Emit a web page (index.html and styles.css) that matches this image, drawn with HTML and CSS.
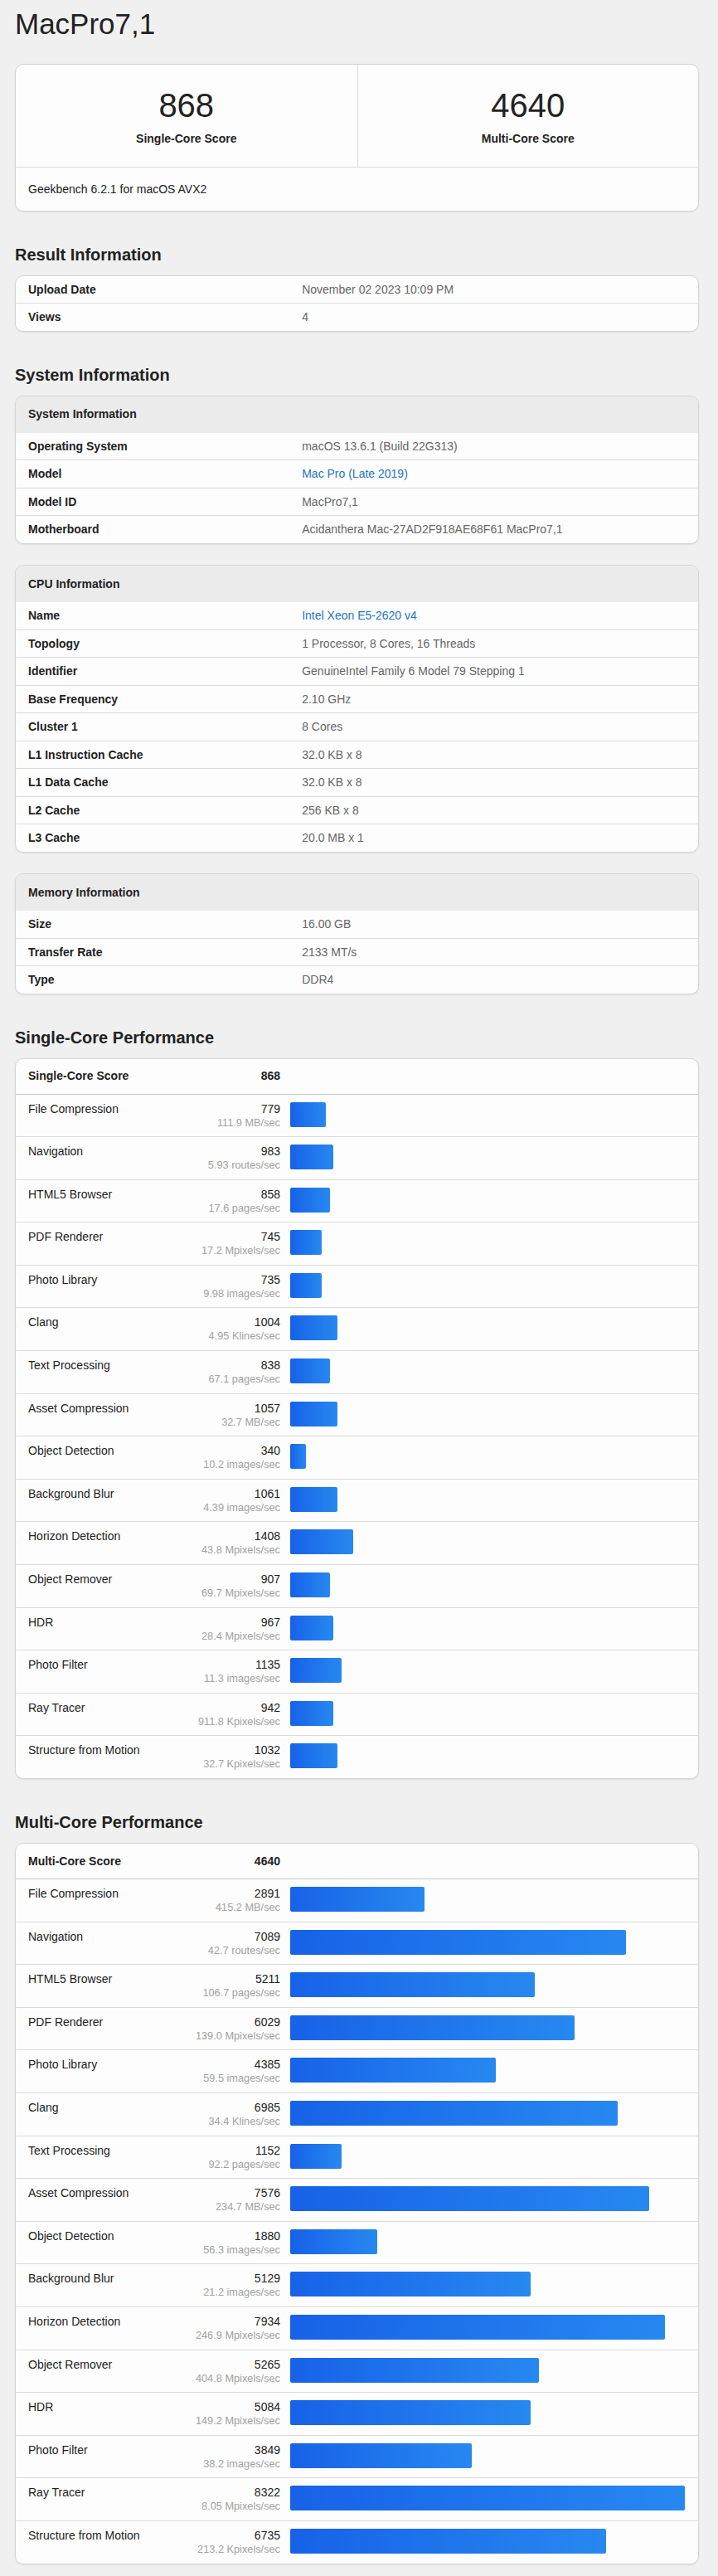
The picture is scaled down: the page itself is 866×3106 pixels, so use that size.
FILE: index.html
```html
<!DOCTYPE html>
<html lang="en">
<head>
<meta charset="utf-8">
<title>MacPro7,1 - Geekbench</title>
<link rel="stylesheet" href="styles.css">
</head>
<body>
<div class="page">
  <h1 class="title">MacPro7,1</h1>

  <div class="card score-card">
    <div class="scores">
      <div class="score">
        <div class="score-num">868</div>
        <div class="score-label">Single-Core Score</div>
      </div>
      <div class="score">
        <div class="score-num">4640</div>
        <div class="score-label">Multi-Core Score</div>
      </div>
    </div>
    <div class="score-foot">Geekbench 6.2.1 for macOS AVX2</div>
  </div>

  <section class="section">
    <h2 class="heading">Result Information</h2>
    <div class="card info">
      <div class="info-row"><div class="info-key">Upload Date</div><div class="info-val">November 02 2023 10:09 PM</div></div>
      <div class="info-row"><div class="info-key">Views</div><div class="info-val">4</div></div>
    </div>
  </section>

  <section class="section">
    <h2 class="heading">System Information</h2>
    <div class="card info">
      <div class="info-head">System Information</div>
      <div class="info-row"><div class="info-key">Operating System</div><div class="info-val">macOS 13.6.1 (Build 22G313)</div></div>
      <div class="info-row"><div class="info-key">Model</div><div class="info-val"><a class="link" href="#">Mac Pro (Late 2019)</a></div></div>
      <div class="info-row"><div class="info-key">Model ID</div><div class="info-val">MacPro7,1</div></div>
      <div class="info-row"><div class="info-key">Motherboard</div><div class="info-val">Acidanthera Mac-27AD2F918AE68F61 MacPro7,1</div></div>
    </div>
    <div class="card info">
      <div class="info-head">CPU Information</div>
      <div class="info-row"><div class="info-key">Name</div><div class="info-val"><a class="link" href="#">Intel Xeon E5-2620 v4</a></div></div>
      <div class="info-row"><div class="info-key">Topology</div><div class="info-val">1 Processor, 8 Cores, 16 Threads</div></div>
      <div class="info-row"><div class="info-key">Identifier</div><div class="info-val">GenuineIntel Family 6 Model 79 Stepping 1</div></div>
      <div class="info-row"><div class="info-key">Base Frequency</div><div class="info-val">2.10 GHz</div></div>
      <div class="info-row"><div class="info-key">Cluster 1</div><div class="info-val">8 Cores</div></div>
      <div class="info-row"><div class="info-key">L1 Instruction Cache</div><div class="info-val">32.0 KB x 8</div></div>
      <div class="info-row"><div class="info-key">L1 Data Cache</div><div class="info-val">32.0 KB x 8</div></div>
      <div class="info-row"><div class="info-key">L2 Cache</div><div class="info-val">256 KB x 8</div></div>
      <div class="info-row"><div class="info-key">L3 Cache</div><div class="info-val">20.0 MB x 1</div></div>
    </div>
    <div class="card info">
      <div class="info-head">Memory Information</div>
      <div class="info-row"><div class="info-key">Size</div><div class="info-val">16.00 GB</div></div>
      <div class="info-row"><div class="info-key">Transfer Rate</div><div class="info-val">2133 MT/s</div></div>
      <div class="info-row"><div class="info-key">Type</div><div class="info-val">DDR4</div></div>
    </div>
  </section>

  <section class="section">
    <h2 class="heading">Single-Core Performance</h2>
    <div class="card perf">
      <div class="perf-score"><div class="perf-left"><span>Single-Core Score</span><span>868</span></div><div></div></div>
      <div class="perf-row"><div class="perf-left"><div class="perf-name">File Compression</div><div class="perf-nums"><div class="perf-val">779</div><div class="perf-unit">111.9 MB/sec</div></div></div><div class="perf-track"><div class="bar" style="width:9%"></div></div></div>
      <div class="perf-row"><div class="perf-left"><div class="perf-name">Navigation</div><div class="perf-nums"><div class="perf-val">983</div><div class="perf-unit">5.93 routes/sec</div></div></div><div class="perf-track"><div class="bar" style="width:11%"></div></div></div>
      <div class="perf-row"><div class="perf-left"><div class="perf-name">HTML5 Browser</div><div class="perf-nums"><div class="perf-val">858</div><div class="perf-unit">17.6 pages/sec</div></div></div><div class="perf-track"><div class="bar" style="width:10%"></div></div></div>
      <div class="perf-row"><div class="perf-left"><div class="perf-name">PDF Renderer</div><div class="perf-nums"><div class="perf-val">745</div><div class="perf-unit">17.2 Mpixels/sec</div></div></div><div class="perf-track"><div class="bar" style="width:8%"></div></div></div>
      <div class="perf-row"><div class="perf-left"><div class="perf-name">Photo Library</div><div class="perf-nums"><div class="perf-val">735</div><div class="perf-unit">9.98 images/sec</div></div></div><div class="perf-track"><div class="bar" style="width:8%"></div></div></div>
      <div class="perf-row"><div class="perf-left"><div class="perf-name">Clang</div><div class="perf-nums"><div class="perf-val">1004</div><div class="perf-unit">4.95 Klines/sec</div></div></div><div class="perf-track"><div class="bar" style="width:12%"></div></div></div>
      <div class="perf-row"><div class="perf-left"><div class="perf-name">Text Processing</div><div class="perf-nums"><div class="perf-val">838</div><div class="perf-unit">67.1 pages/sec</div></div></div><div class="perf-track"><div class="bar" style="width:10%"></div></div></div>
      <div class="perf-row"><div class="perf-left"><div class="perf-name">Asset Compression</div><div class="perf-nums"><div class="perf-val">1057</div><div class="perf-unit">32.7 MB/sec</div></div></div><div class="perf-track"><div class="bar" style="width:12%"></div></div></div>
      <div class="perf-row"><div class="perf-left"><div class="perf-name">Object Detection</div><div class="perf-nums"><div class="perf-val">340</div><div class="perf-unit">10.2 images/sec</div></div></div><div class="perf-track"><div class="bar" style="width:4%"></div></div></div>
      <div class="perf-row"><div class="perf-left"><div class="perf-name">Background Blur</div><div class="perf-nums"><div class="perf-val">1061</div><div class="perf-unit">4.39 images/sec</div></div></div><div class="perf-track"><div class="bar" style="width:12%"></div></div></div>
      <div class="perf-row"><div class="perf-left"><div class="perf-name">Horizon Detection</div><div class="perf-nums"><div class="perf-val">1408</div><div class="perf-unit">43.8 Mpixels/sec</div></div></div><div class="perf-track"><div class="bar" style="width:16%"></div></div></div>
      <div class="perf-row"><div class="perf-left"><div class="perf-name">Object Remover</div><div class="perf-nums"><div class="perf-val">907</div><div class="perf-unit">69.7 Mpixels/sec</div></div></div><div class="perf-track"><div class="bar" style="width:10%"></div></div></div>
      <div class="perf-row"><div class="perf-left"><div class="perf-name">HDR</div><div class="perf-nums"><div class="perf-val">967</div><div class="perf-unit">28.4 Mpixels/sec</div></div></div><div class="perf-track"><div class="bar" style="width:11%"></div></div></div>
      <div class="perf-row"><div class="perf-left"><div class="perf-name">Photo Filter</div><div class="perf-nums"><div class="perf-val">1135</div><div class="perf-unit">11.3 images/sec</div></div></div><div class="perf-track"><div class="bar" style="width:13%"></div></div></div>
      <div class="perf-row"><div class="perf-left"><div class="perf-name">Ray Tracer</div><div class="perf-nums"><div class="perf-val">942</div><div class="perf-unit">911.8 Kpixels/sec</div></div></div><div class="perf-track"><div class="bar" style="width:11%"></div></div></div>
      <div class="perf-row"><div class="perf-left"><div class="perf-name">Structure from Motion</div><div class="perf-nums"><div class="perf-val">1032</div><div class="perf-unit">32.7 Kpixels/sec</div></div></div><div class="perf-track"><div class="bar" style="width:12%"></div></div></div>
    </div>
  </section>

  <section class="section">
    <h2 class="heading">Multi-Core Performance</h2>
    <div class="card perf">
      <div class="perf-score"><div class="perf-left"><span>Multi-Core Score</span><span>4640</span></div><div></div></div>
      <div class="perf-row"><div class="perf-left"><div class="perf-name">File Compression</div><div class="perf-nums"><div class="perf-val">2891</div><div class="perf-unit">415.2 MB/sec</div></div></div><div class="perf-track"><div class="bar" style="width:34%"></div></div></div>
      <div class="perf-row"><div class="perf-left"><div class="perf-name">Navigation</div><div class="perf-nums"><div class="perf-val">7089</div><div class="perf-unit">42.7 routes/sec</div></div></div><div class="perf-track"><div class="bar" style="width:85%"></div></div></div>
      <div class="perf-row"><div class="perf-left"><div class="perf-name">HTML5 Browser</div><div class="perf-nums"><div class="perf-val">5211</div><div class="perf-unit">106.7 pages/sec</div></div></div><div class="perf-track"><div class="bar" style="width:62%"></div></div></div>
      <div class="perf-row"><div class="perf-left"><div class="perf-name">PDF Renderer</div><div class="perf-nums"><div class="perf-val">6029</div><div class="perf-unit">139.0 Mpixels/sec</div></div></div><div class="perf-track"><div class="bar" style="width:72%"></div></div></div>
      <div class="perf-row"><div class="perf-left"><div class="perf-name">Photo Library</div><div class="perf-nums"><div class="perf-val">4385</div><div class="perf-unit">59.5 images/sec</div></div></div><div class="perf-track"><div class="bar" style="width:52%"></div></div></div>
      <div class="perf-row"><div class="perf-left"><div class="perf-name">Clang</div><div class="perf-nums"><div class="perf-val">6985</div><div class="perf-unit">34.4 Klines/sec</div></div></div><div class="perf-track"><div class="bar" style="width:83%"></div></div></div>
      <div class="perf-row"><div class="perf-left"><div class="perf-name">Text Processing</div><div class="perf-nums"><div class="perf-val">1152</div><div class="perf-unit">92.2 pages/sec</div></div></div><div class="perf-track"><div class="bar" style="width:13%"></div></div></div>
      <div class="perf-row"><div class="perf-left"><div class="perf-name">Asset Compression</div><div class="perf-nums"><div class="perf-val">7576</div><div class="perf-unit">234.7 MB/sec</div></div></div><div class="perf-track"><div class="bar" style="width:91%"></div></div></div>
      <div class="perf-row"><div class="perf-left"><div class="perf-name">Object Detection</div><div class="perf-nums"><div class="perf-val">1880</div><div class="perf-unit">56.3 images/sec</div></div></div><div class="perf-track"><div class="bar" style="width:22%"></div></div></div>
      <div class="perf-row"><div class="perf-left"><div class="perf-name">Background Blur</div><div class="perf-nums"><div class="perf-val">5129</div><div class="perf-unit">21.2 images/sec</div></div></div><div class="perf-track"><div class="bar" style="width:61%"></div></div></div>
      <div class="perf-row"><div class="perf-left"><div class="perf-name">Horizon Detection</div><div class="perf-nums"><div class="perf-val">7934</div><div class="perf-unit">246.9 Mpixels/sec</div></div></div><div class="perf-track"><div class="bar" style="width:95%"></div></div></div>
      <div class="perf-row"><div class="perf-left"><div class="perf-name">Object Remover</div><div class="perf-nums"><div class="perf-val">5265</div><div class="perf-unit">404.8 Mpixels/sec</div></div></div><div class="perf-track"><div class="bar" style="width:63%"></div></div></div>
      <div class="perf-row"><div class="perf-left"><div class="perf-name">HDR</div><div class="perf-nums"><div class="perf-val">5084</div><div class="perf-unit">149.2 Mpixels/sec</div></div></div><div class="perf-track"><div class="bar" style="width:61%"></div></div></div>
      <div class="perf-row"><div class="perf-left"><div class="perf-name">Photo Filter</div><div class="perf-nums"><div class="perf-val">3849</div><div class="perf-unit">38.2 images/sec</div></div></div><div class="perf-track"><div class="bar" style="width:46%"></div></div></div>
      <div class="perf-row"><div class="perf-left"><div class="perf-name">Ray Tracer</div><div class="perf-nums"><div class="perf-val">8322</div><div class="perf-unit">8.05 Mpixels/sec</div></div></div><div class="perf-track"><div class="bar" style="width:100%"></div></div></div>
      <div class="perf-row"><div class="perf-left"><div class="perf-name">Structure from Motion</div><div class="perf-nums"><div class="perf-val">6735</div><div class="perf-unit">213.2 Kpixels/sec</div></div></div><div class="perf-track"><div class="bar" style="width:80%"></div></div></div>
    </div>
  </section>
</div>
</body>
</html>
```

FILE: styles.css
```css
* { box-sizing: border-box; }

html, body {
  margin: 0;
  padding: 0;
  background: #f0f0f0;
}

body {
  font-family: "Liberation Sans", Arial, Helvetica, sans-serif;
  font-size: 14px;
  line-height: 17px;
  color: #222;
}

.page {
  padding: 9px 23px 11px 18px;
}

.title {
  margin: 0 0 28px;
  font-size: 35px;
  line-height: 40px;
  font-weight: 400;
  color: #222;
}

.card {
  background: #fdfdfd;
  border: 1px solid #d5d5d5;
  border-radius: 10px;
  box-shadow: 0 1px 2px rgba(0, 0, 0, 0.08);
  overflow: hidden;
}

/* Score card */
.scores {
  display: grid;
  grid-template-columns: 1fr 1fr;
  border-bottom: 1px solid #dadada;
}

.score {
  padding: 25px 16px;
  text-align: center;
}

.score + .score {
  border-left: 1px solid #dadada;
}

.score-num {
  font-size: 40px;
  line-height: 48px;
  color: #222;
}

.score-label {
  margin-top: 8px;
  font-weight: 700;
  color: #222;
}

.score-foot {
  padding: 18px 16px 16.5px 15px;
  color: #222;
}

/* Sections */
.section {
  margin-top: 40px;
}

.heading {
  margin: 0 0 13px;
  font-size: 20px;
  line-height: 24px;
  font-weight: 700;
  color: #222;
}

.section .card + .card {
  margin-top: 25.5px;
}

/* Info tables */
.info-head {
  padding: 13.5px 16px 13.5px 15px;
  background: #ebebeb;
  font-weight: 700;
}

.info-row {
  display: grid;
  grid-template-columns: 40% 60%;
  line-height: 16.5px;
}

.info-row + .info-row {
  border-top: 1px solid #dcdcdc;
}

.info-key {
  padding: 8px 16px 8px 15px;
  font-weight: 700;
  color: #222;
}

.info-val {
  padding: 8px 16px;
  color: #666;
}

.link {
  color: #2474c6;
  text-decoration: none;
}

/* Performance tables */
.perf-score,
.perf-row {
  display: grid;
  grid-template-columns: 1fr 476px;
  column-gap: 12px;
  align-items: start;
}

.perf-score {
  padding: 12.5px 16px 12.5px 15px;
  font-weight: 700;
  border-bottom: 1px solid #c9c9c9;
}

.perf-row {
  padding: 9px 16px 8.6px 15px;
}

.perf-row + .perf-row {
  border-top: 1px solid #dcdcdc;
}

.perf-left {
  display: flex;
  justify-content: space-between;
  align-items: flex-start;
}

.perf-name {
  color: #222;
}

.perf-nums {
  text-align: right;
}

.perf-val {
  color: #222;
}

.perf-unit {
  font-size: 12.75px;
  line-height: 16px;
  color: #a2a2a2;
}

.perf-track {
  height: 30px;
}

.bar {
  height: 30px;
  border-radius: 2px;
  background: linear-gradient(to right, #1762e8, #2788f0);
}
```
